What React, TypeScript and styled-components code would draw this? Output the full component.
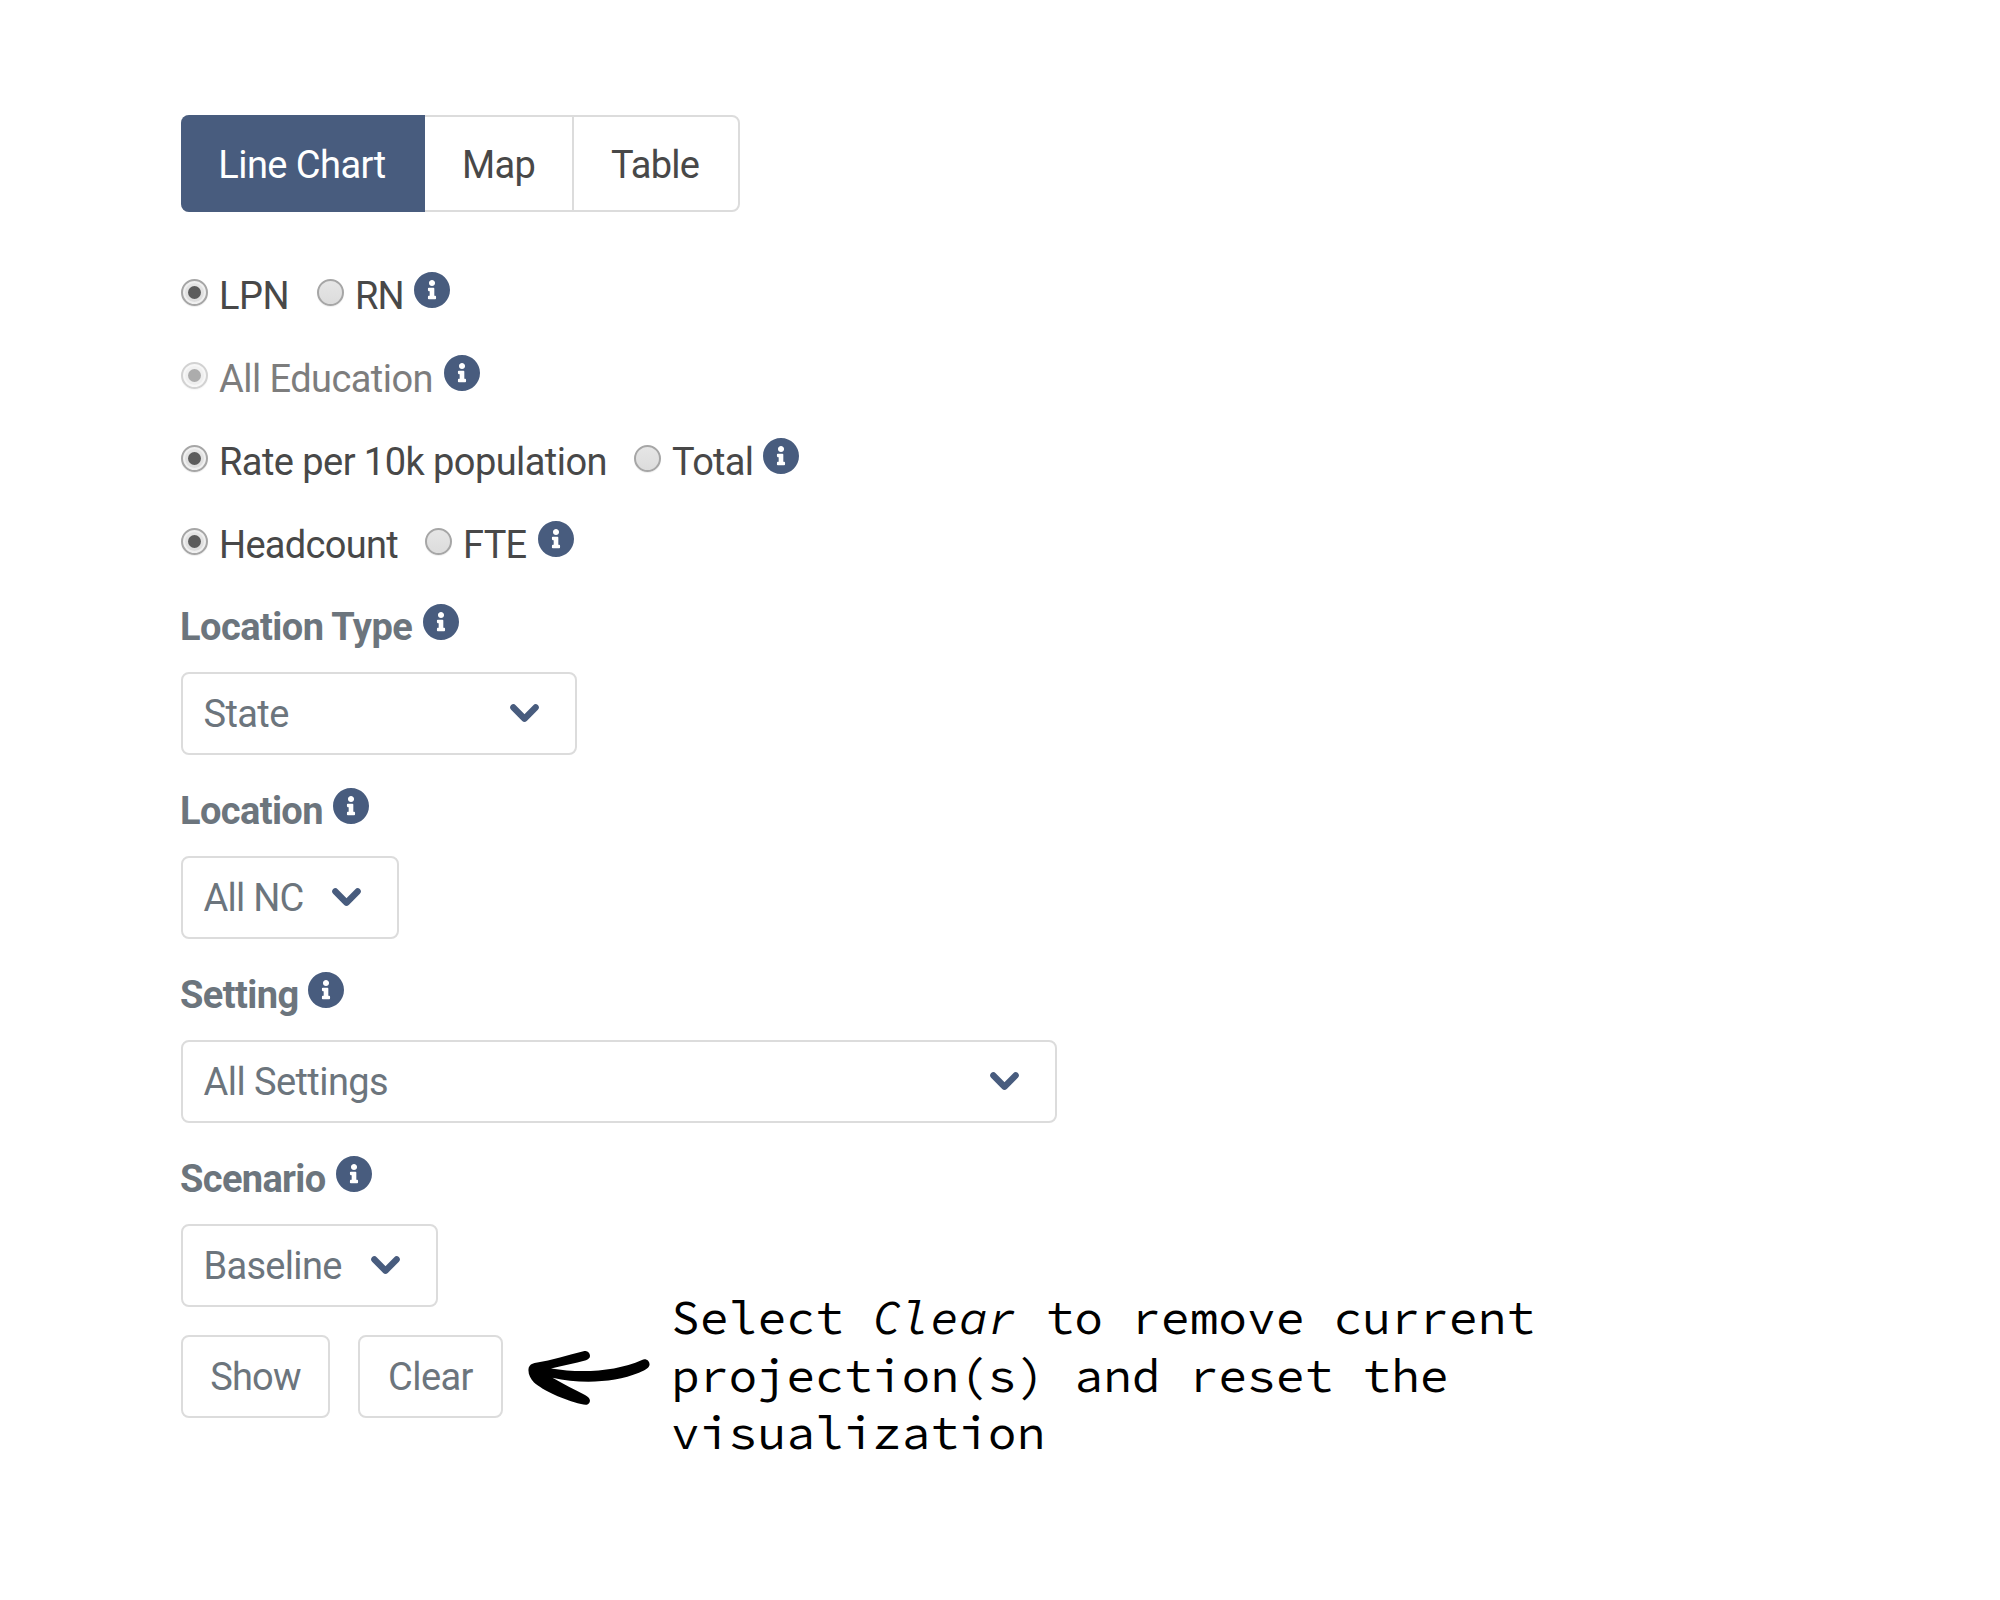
import React from "react";
import styled, { createGlobalStyle } from "styled-components";

const navy = "#485c7e";

const GlobalStyle = createGlobalStyle`
  body {
    margin: 0;
    background: #fff;
  }
`;

const Page = styled.main`
  box-sizing: border-box;
  width: 2000px;
  height: 1600px;
  padding: 115px 0 0 180px;
  overflow: hidden;
  background: #fff;
  color: #484848;
  font-family: Roboto, sans-serif;
  font-size: 38px;
`;

const Tabs = styled.nav`
  box-sizing: border-box;
  display: flex;
  width: 559px;
  height: 97px;
  margin: 0 0 42px 1px;
  border: 2px solid #dcdcdc;
  border-radius: 8px;
`;

const Tab = styled.div<{ $w: number; $active?: boolean; $track?: number }>`
  box-sizing: border-box;
  flex: none;
  display: flex;
  align-items: center;
  justify-content: center;
  width: ${(p) => p.$w}px;
  padding: 2px 2px 0 0;
  letter-spacing: ${(p) => p.$track ?? 0}px;
  border-left: ${(p) => (p.$active ? "0" : "2px solid #dcdcdc")};
  ${(p) =>
    p.$active &&
    `
    margin: -2px 0 -2px -2px;
    border-radius: 8px 0 0 8px;
    background: ${navy};
    color: #fff;
    & + div { border-left: 0; padding-right: 0; }
  `}
`;

const Row = styled.div`
  display: flex;
  align-items: center;
  height: 83px;
`;

const Text = styled.span<{ $w: number; $track?: number; $muted?: boolean }>`
  flex: none;
  width: ${(p) => p.$w}px;
  white-space: nowrap;
  letter-spacing: ${(p) => p.$track ?? 0}px;
  color: ${(p) => (p.$muted ? "#7d7d7d" : "inherit")};
`;

const Label = styled(Text)`
  margin-bottom: 2px;
  font-weight: 700;
  color: #6c757d;
`;

const Radio = styled.span<{ $on?: boolean; $disabled?: boolean }>`
  box-sizing: border-box;
  flex: none;
  display: flex;
  align-items: center;
  justify-content: center;
  width: 27px;
  height: 27px;
  margin: 0 11px 6px 1px;
  border: 2px solid #a6a6a6;
  border-radius: 50%;
  background: linear-gradient(#e6e6e6, #dcdcdc);
  box-shadow: 0 1px 1px #eeeeee${(p) => (p.$on ? ", inset 0 0 0 2px #f0f0f0" : "")};
  opacity: ${(p) => (p.$disabled ? 0.5 : 1)};

  &::after {
    content: "";
    width: 13px;
    height: 13px;
    border-radius: 50%;
    background: ${(p) => (p.$on ? "#5c5c5c" : "transparent")};
  }
`;

const InfoMark = styled.svg`
  flex: none;
  width: 36px;
  height: 36px;
  margin-bottom: 11px;
`;

const Select = styled.div<{ $w: number }>`
  box-sizing: border-box;
  display: flex;
  align-items: center;
  justify-content: space-between;
  width: ${(p) => p.$w}px;
  height: 83px;
  margin: 3px 0 15px 1px;
  padding: 0 36px 0 20.5px;
  border: 2px solid #dcdcdc;
  border-radius: 8px;
  color: #6c757d;
`;

const Chevron = styled.svg`
  flex: none;
  width: 29px;
  height: 18.5px;
`;

const Footer = styled.div`
  display: flex;
  align-items: flex-start;
  margin: 28px 0 0 1px;
`;

const Button = styled.div<{ $w: number; $track: number }>`
  box-sizing: border-box;
  flex: none;
  display: flex;
  align-items: center;
  justify-content: center;
  width: ${(p) => p.$w}px;
  height: 83px;
  margin-right: 28px;
  border: 2px solid #dcdcdc;
  border-radius: 8px;
  color: #6c757d;
  letter-spacing: ${(p) => p.$track}px;
`;

const Arrow = styled.svg`
  flex: none;
  width: 124px;
  height: 56px;
  margin: 14px 20px 0 -4px;
`;

const Note = styled.p`
  flex: none;
  margin: -46px 0 0;
  color: #000;
  font: 48px/57.6px "Source Code Pro", "Noto Sans Mono", "Liberation Mono", monospace;
  white-space: pre;
`;

const Info = () => (
  <InfoMark viewBox="8 8 496 496">
    <path
      fill={navy}
      d="M256 8C119.043 8 8 119.083 8 256c0 136.997 111.043 248 248 248s248-111.003 248-248C504 119.083 392.957 8 256 8zm0 110c23.196 0 42 18.804 42 42s-18.804 42-42 42-42-18.804-42-42 18.804-42 42-42zm56 254c0 6.627-5.373 12-12 12h-88c-6.627 0-12-5.373-12-12v-24c0-6.627 5.373-12 12-12h12v-64h-12c-6.627 0-12-5.373-12-12v-24c0-6.627 5.373-12 12-12h64c6.627 0 12 5.373 12 12v100h12c6.627 0 12 5.373 12 12v24z"
    />
  </InfoMark>
);

const Dropdown = ({ w, text, track }: { w: number; text: string; track: number }) => (
  <Select $w={w}>
    <Text $w={10} $track={track}>{text}</Text>
    <Chevron viewBox="0 0 29 18.5">
      <path
        d="M3.4 3.4L14.5 14.7L25.6 3.4"
        fill="none"
        stroke={navy}
        strokeWidth="6.4"
        strokeLinecap="round"
        strokeLinejoin="round"
      />
    </Chevron>
  </Select>
);

export default function App() {
  return (
    <>
      <GlobalStyle />
      <Page>
        <Tabs>
          <Tab $w={244} $active $track={-0.55}>Line Chart</Tab>
          <Tab $w={147} $track={-0.7}>Map</Tab>
          <Tab $w={166} $track={-0.8}>Table</Tab>
        </Tabs>
        <Row>
          <Radio $on />
          <Text $w={97} $track={-0.5}>LPN</Text>
          <Radio />
          <Text $w={59} $track={-0.9}>RN</Text>
          <Info />
        </Row>
        <Row>
          <Radio $on $disabled />
          <Text $w={224.5} $track={-0.56} $muted>All Education</Text>
          <Info />
        </Row>
        <Row>
          <Radio $on />
          <Text $w={414} $track={-0.56}>Rate per 10k population</Text>
          <Radio />
          <Text $w={91} $track={-0.7}>Total</Text>
          <Info />
        </Row>
        <Row>
          <Radio $on />
          <Text $w={205} $track={-0.7}>Headcount</Text>
          <Radio />
          <Text $w={75} $track={-0.75}>FTE</Text>
          <Info />
        </Row>
        <Row>
          <Label $w={243} $track={-0.55}>Location Type</Label>
          <Info />
        </Row>
        <Dropdown w={396} text="State" track={-0.6} />
        <Row>
          <Label $w={153.2} $track={-0.62}>Location</Label>
          <Info />
        </Row>
        <Dropdown w={218} text="All NC" track={-0.75} />
        <Row>
          <Label $w={127.8} $track={-0.58}>Setting</Label>
          <Info />
        </Row>
        <Dropdown w={876} text="All Settings" track={-0.57} />
        <Row>
          <Label $w={156} $track={-0.65}>Scenario</Label>
          <Info />
        </Row>
        <Dropdown w={257} text="Baseline" track={-0.7} />
        <Footer>
          <Button $w={149} $track={-0.75}>Show</Button>
          <Button $w={145} $track={-0.57}>Clear</Button>
          <Arrow viewBox="0 0 124 56">
            <path d="M56.5 2.2C60.5 1.5 63 4 63 7C63 9 61 10.5 59 11.3C48 14.5 35 17 24 19.5C55 24.500 89 22.500 115 11C119 9 123 12 122.500 16C122 19.500 116 22 112 23.800C87 34 53 35 25.500 28.700C37 35 48 41 58 46C61.500 48 64 50 62.500 53.500C61 56.500 58 56 54 55C37 51 16 41.500 7 33.500C3.500 30 1 25 1.500 20C2 16 5 14.500 9 13.800C25 11 41 6 56.500 2.200Z" fill="#000" />
          </Arrow>
          <Note>
            Select <i>Clear</i> to remove current{"\n"}projection(s) and reset the{"\n"}visualization
          </Note>
        </Footer>
      </Page>
    </>
  );
}
